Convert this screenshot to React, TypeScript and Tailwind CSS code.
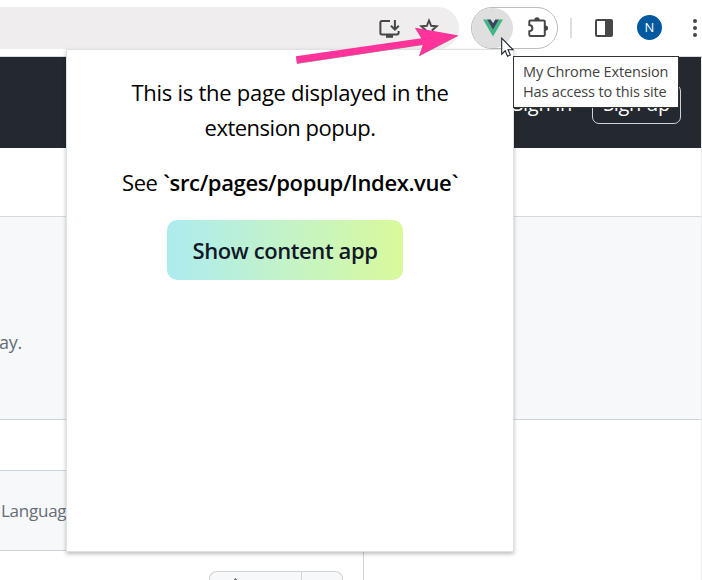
import React from "react";

const SANS = "font-['Open_Sans','Noto_Sans',sans-serif]";

function InstallIcon() {
  return (
    <svg width="22" height="20" viewBox="0 0 22 20" fill="none" stroke="#474747" strokeWidth="2">
      <path d="M11 2H2.900a1.500 1.500 0 0 0-1.500 1.500v10.600a1.500 1.500 0 0 0 1.500 1.500h15.200a1.500 1.500 0 0 0 1.500-1.500V12" />
      <path d="M15.900 1v9M12 6.800l3.900 3.800 3.900-3.800" />
      <path d="M7 17.400h7" strokeWidth="2.800" />
    </svg>
  );
}

function StarIcon() {
  return (
    <svg width="20" height="20" viewBox="0 0 20 20" fill="none" stroke="#474747" strokeWidth="1.9">
      <path d="m10 2.5 2.150 5.300 5.550.45-4.250 3.700 1.300 5.500L10 14.500l-4.750 2.950 1.300-5.500L2.300 8.250l5.550-.45z" />
    </svg>
  );
}

function VueIcon() {
  return (
    <svg width="20" height="18" viewBox="0 0 20 18">
      <path d="M0 .5h4l6 10 6-10h4L10 17.400z" fill="#41b883" />
      <path d="M4 .5h3.700L10 4.300 12.300.5H16l-6 10.200z" fill="#35495e" />
    </svg>
  );
}

function PuzzleIcon() {
  return (
    <svg width="23" height="23" viewBox="0 0 23 23">
      <path
        d="M3.500 4.400h13.100a1.200 1.200 0 0 1 1.200 1.200v13.100a1.200 1.200 0 0 1-1.200 1.200H3.500a1.200 1.200 0 0 1-1.200-1.200v-3.400c2-.3 3.100-1.500 3.100-3.100s-1.100-2.800-3.100-3.100V5.600a1.200 1.200 0 0 1 1.200-1.200z"
        fill="none"
        stroke="#474747"
        strokeWidth="2"
      />
      <path d="M7.300 4.600V4a2.700 2.700 0 0 1 5.400 0v.6zM18 9.500h.5a2.600 2.600 0 0 1 0 5.200H18z" fill="#474747" />
    </svg>
  );
}

function Toolbar() {
  return (
    <div className="flex h-[57px] border-b border-[#d9d9dc] bg-white">
      <div className="flex h-[42px] w-[459px] mt-[7px] shrink-0 rounded-r-full bg-[#efedee]">
        <div className="ml-[379px] mt-[12px]"><InstallIcon /></div>
        <div className="ml-[18px] mt-[11px]"><StarIcon /></div>
      </div>
      <div className="ml-[12px] mt-[7px] flex h-[42px] w-[87px] shrink-0 overflow-hidden rounded-full border border-[#bcbcbc]">
        <div className="flex h-full w-[41px] justify-center rounded-r-full bg-[#dfdfdf] pt-[11px]"><VueIcon /></div>
        <div className="ml-[14px] mt-[8px]"><PuzzleIcon /></div>
      </div>
      <div className="ml-[12px] mt-[18px] h-[20px] w-[2px] bg-[#dfdfdf]" />
      <div className="ml-[23px] mt-[19px] flex h-[18px] w-[18px] rounded-[2px] border-2 border-[#474747]">
        <div className="ml-auto h-full w-[6px] bg-[#474747]" />
      </div>
      <div className="ml-[24px] mt-[15px] flex h-[25px] w-[25px] items-center justify-center rounded-full bg-[#00589e] text-[13px] font-medium text-white">N</div>
      <div className="ml-[31px] mt-[19px] flex h-[18px] shrink-0 flex-col justify-between">
        <i className="h-[4px] w-[4px] rounded-full bg-[#474747]" />
        <i className="h-[4px] w-[4px] rounded-full bg-[#474747]" />
        <i className="h-[4px] w-[4px] rounded-full bg-[#474747]" />
      </div>
    </div>
  );
}

function Page() {
  return (
    <div className="h-[523px] w-[702px] border-r border-[#ececee]">
      <div className="flex h-[91px] items-start justify-end bg-[#24292f] pr-[20px] pt-[27px] text-[20px] leading-[40px] text-white">
        <span className="mr-[20px] whitespace-nowrap tracking-[-0.3px]">Sign in</span>
        <span className="flex h-[40px] w-[89px] items-center justify-center whitespace-nowrap rounded-[7px] border border-[#d0d2d5] tracking-[-0.3px]">Sign up</span>
      </div>
      <div className="h-[69px] border-b border-[#d5d8dc]" />
      <div className="h-[203px] border-b border-[#cdd3da] bg-[#f6f8fa] pt-[111px] text-[18px] leading-[28px] text-[#656d76]">
        <span className="ml-[-1px] tracking-[-0.3px]">ay.</span>
      </div>
      <div className="flex h-[160px]">
        <div className="w-[364px] shrink-0 border-r border-[#d0d3dc]">
          <div className="mt-[50px] h-[81px] border-y border-[#ccd4df] bg-[#f6f8fa] pl-[1px] text-[17px] leading-[80px] tracking-[-0.25px] text-[#656d76]">Language</div>
          <div className="ml-[209px] mt-[20px] flex h-[9px] w-[134px] rounded-t-[8px] border border-b-0 border-[#d2d4d8] bg-[#f6f8fa]">
            <div className="h-full w-[92px] overflow-hidden border-r border-[#d2d4d8]">
              <svg className="ml-[21px] mt-[6px]" width="9" height="5" viewBox="0 0 9 5"><path d="M4.500 0 9 5H0z" fill="#57606a" /></svg>
            </div>
          </div>
        </div>
      </div>
    </div>
  );
}

function Popup() {
  return (
    <div className="absolute left-[66px] top-[49px] h-[503px] w-[448px] border border-[#dfe2e2] bg-white text-center text-[22px] leading-[35px] text-black shadow-[0_2px_4px_rgba(0,0,0,0.25)]">
      <p className="mt-[25px] whitespace-nowrap tracking-[-0.5px]">
        <span className="tracking-[-0.27px]">This is the page displayed in the</span><br />extension popup.
      </p>
      <p className="mt-[20px] whitespace-nowrap tracking-[-0.37px]">
        See <b className="font-semibold">`src/pages/popup/Index.vue`</b>
      </p>
      <button className="ml-[-10px] mt-[20px] h-[60px] w-[236px] whitespace-nowrap rounded-[10px] bg-linear-to-r from-[#adebef] to-[#d9f99a] font-semibold tracking-[-0.4px] text-[#111827]">
        Show content app
      </button>
    </div>
  );
}

export default function App() {
  return (
    <div className={`relative h-[580px] w-[702px] overflow-hidden bg-white ${SANS}`}>
      <Toolbar />
      <Page />
      <Popup />
      <div className="absolute left-[513px] top-[56px] h-[52px] w-[166px] whitespace-nowrap border border-[#333] bg-white pl-[9px] pt-[5px] text-[14.5px] leading-[20px] tracking-[-0.15px] text-[#424242]">
        <div>My Chrome Extension</div>
        <div>Has access to this site</div>
      </div>
      <svg className="absolute left-[290px] top-[20px]" width="174" height="50" viewBox="290 20 174 50">
        <path d="m296 57 125.500-18.300L415 28l43.500 7.700L419 56.500l4-11.500-126 19z" fill="#666" opacity=".6" />
        <path d="m296 56.300 125.500-18L415 27.800l43.500 7.700L419 56l4-11.300L297 63.500z" fill="#ff3399" />
      </svg>
      <svg className="absolute left-[501px] top-[37px]" width="14" height="22" viewBox="0 0 14 22">
        <path d="M.7 1.200v16l3.500-3.400 2.300 5.400 2.800-1.200L7 12.700h5z" fill="#fff" stroke="#1f2430" strokeWidth="1.100" />
      </svg>
    </div>
  );
}
